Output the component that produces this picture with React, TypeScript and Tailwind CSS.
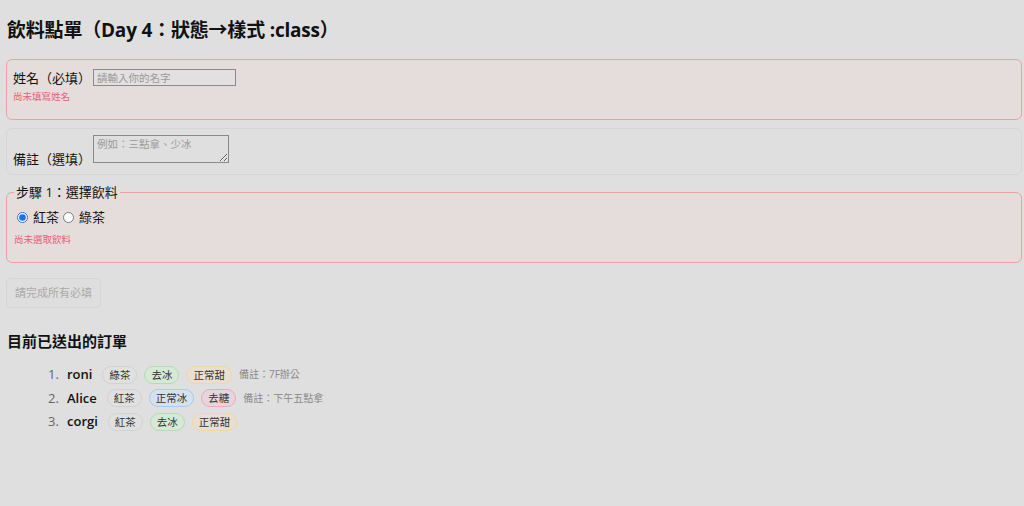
import React from "react";

type Tag = { text: string; cls: string };

const gray = "border-[#d2d2d2] bg-[#e0e0e0]";
const green = "border-[#b4dcb4] bg-[#d6e8d6]";
const orange = "border-[#f3d6a6] bg-[#e8dfd2]";
const blue = "border-[#a9cbee] bg-[#d5e1ec]";
const pink = "border-[#eea8be] bg-[#e6d5db]";

const orders: { name: string; tags: Tag[]; note?: string }[] = [
  {
    name: "roni",
    tags: [
      { text: "綠茶", cls: gray },
      { text: "去冰", cls: green },
      { text: "正常甜", cls: orange },
    ],
    note: "備註：7F辦公",
  },
  {
    name: "Alice",
    tags: [
      { text: "紅茶", cls: gray },
      { text: "正常冰", cls: blue },
      { text: "去糖", cls: pink },
    ],
    note: "備註：下午五點拿",
  },
  {
    name: "corgi",
    tags: [
      { text: "紅茶", cls: gray },
      { text: "去冰", cls: green },
      { text: "正常甜", cls: orange },
    ],
  },
];

export default function App() {
  return (
    <div
      className="min-h-[506px] w-full bg-[#dfdfdf] pl-[6px] pr-[2px] text-[#111]"
      style={{ fontFamily: "'Open Sans', 'Noto Sans CJK TC', sans-serif" }}
    >
      <h1 className="pt-[18px] text-[19px] font-bold leading-[24px] pl-[1px] tracking-[-0.2px]">
        飲料點單（Day 4：狀態→樣式 :class）
      </h1>

      {/* Name box */}
      <div className="mt-[17px] rounded-[6px] border border-[#f0a0a0] bg-[#e5dcdc] px-[6px] pt-[9px] pb-[16px]">
        <div className="flex items-center gap-[2px]">
          <label className="text-[13px] leading-[16px]">姓名（必填）</label>
          <input
            className="h-[17px] w-[143px] border border-[#8a8a8a] bg-[#e2e0e0] px-[3px] text-[10.5px] leading-[15px] outline-none placeholder:text-[#9a9a9a]"
            placeholder="請輸入你的名字"
          />
        </div>
        <div className="mt-[5px] text-[9.5px] leading-[12px] text-[#e8607a]">尚未填寫姓名</div>
      </div>

      {/* Note box */}
      <div className="mt-[8px] rounded-[6px] border border-[#d6d6d6] bg-[#dfdfdf] px-[6px] pt-[6px] pb-[11px]">
        <div className="flex items-end gap-[2px]">
          <label className="mb-[-4px] text-[13px] leading-[16px]">備註（選填）</label>
          <textarea
            className="h-[28px] w-[136px] resize border border-[#8a8a8a] bg-[#dfdfdf] px-[3px] py-[1px] text-[10.5px] leading-[14px] outline-none placeholder:text-[#9a9a9a]"
            placeholder="例如：三點拿、少冰"
          />
        </div>
      </div>

      {/* Fieldset */}
      <fieldset className="mt-[9px] rounded-[6px] border border-[#f0a0a0] bg-[#e5dcdc] px-[7px] pt-[9px] pb-[16px]">
        <legend className="px-[2px] text-[13px] leading-[16px]">步驟 1：選擇飲料</legend>
        <div className="flex items-center text-[13px] leading-[16px]">
          <label className="flex items-center">
            <input type="radio" name="drink" defaultChecked className="m-0 ml-[3px] mr-[5px] h-[11px] w-[11px] accent-[#1a73e8]" />
            紅茶
          </label>
          <label className="ml-[4px] flex items-center">
            <input type="radio" name="drink" className="m-0 mr-[5px] h-[11px] w-[11px]" />
            綠茶
          </label>
        </div>
        <div className="mt-[9px] text-[9.5px] leading-[12px] text-[#e8607a]">尚未選取飲料</div>
      </fieldset>

      <button
        disabled
        className="mt-[15px] h-[30px] w-[95px] rounded-[4px] border border-[#d6d6d6] bg-[#dedede] text-[11px] text-[#a9a9a9]"
      >
        請完成所有必填
      </button>

      <h2 className="mt-[23px] pl-[1px] text-[15px] font-bold leading-[20px]">目前已送出的訂單</h2>

      <ol className="mt-[12px] pl-[42px]">
        {orders.map((o, i) => (
          <li key={o.name} className="flex h-[23.5px] items-center">
            <span className="w-[19px] text-[13px] text-[#666]">{i + 1}.</span>
            <span className="text-[13px] font-semibold">{o.name}</span>
            <span className="ml-[10px] flex items-center gap-[7px]">
              {o.tags.map((t) => (
                <span
                  key={t.text}
                  className={`inline-flex h-[18px] items-center rounded-full border px-[6px] text-[10.5px] leading-none text-[#333] ${t.cls}`}
                >
                  {t.text}
                </span>
              ))}
              {o.note && <span className="text-[10px] text-[#888]">{o.note}</span>}
            </span>
          </li>
        ))}
      </ol>
    </div>
  );
}
